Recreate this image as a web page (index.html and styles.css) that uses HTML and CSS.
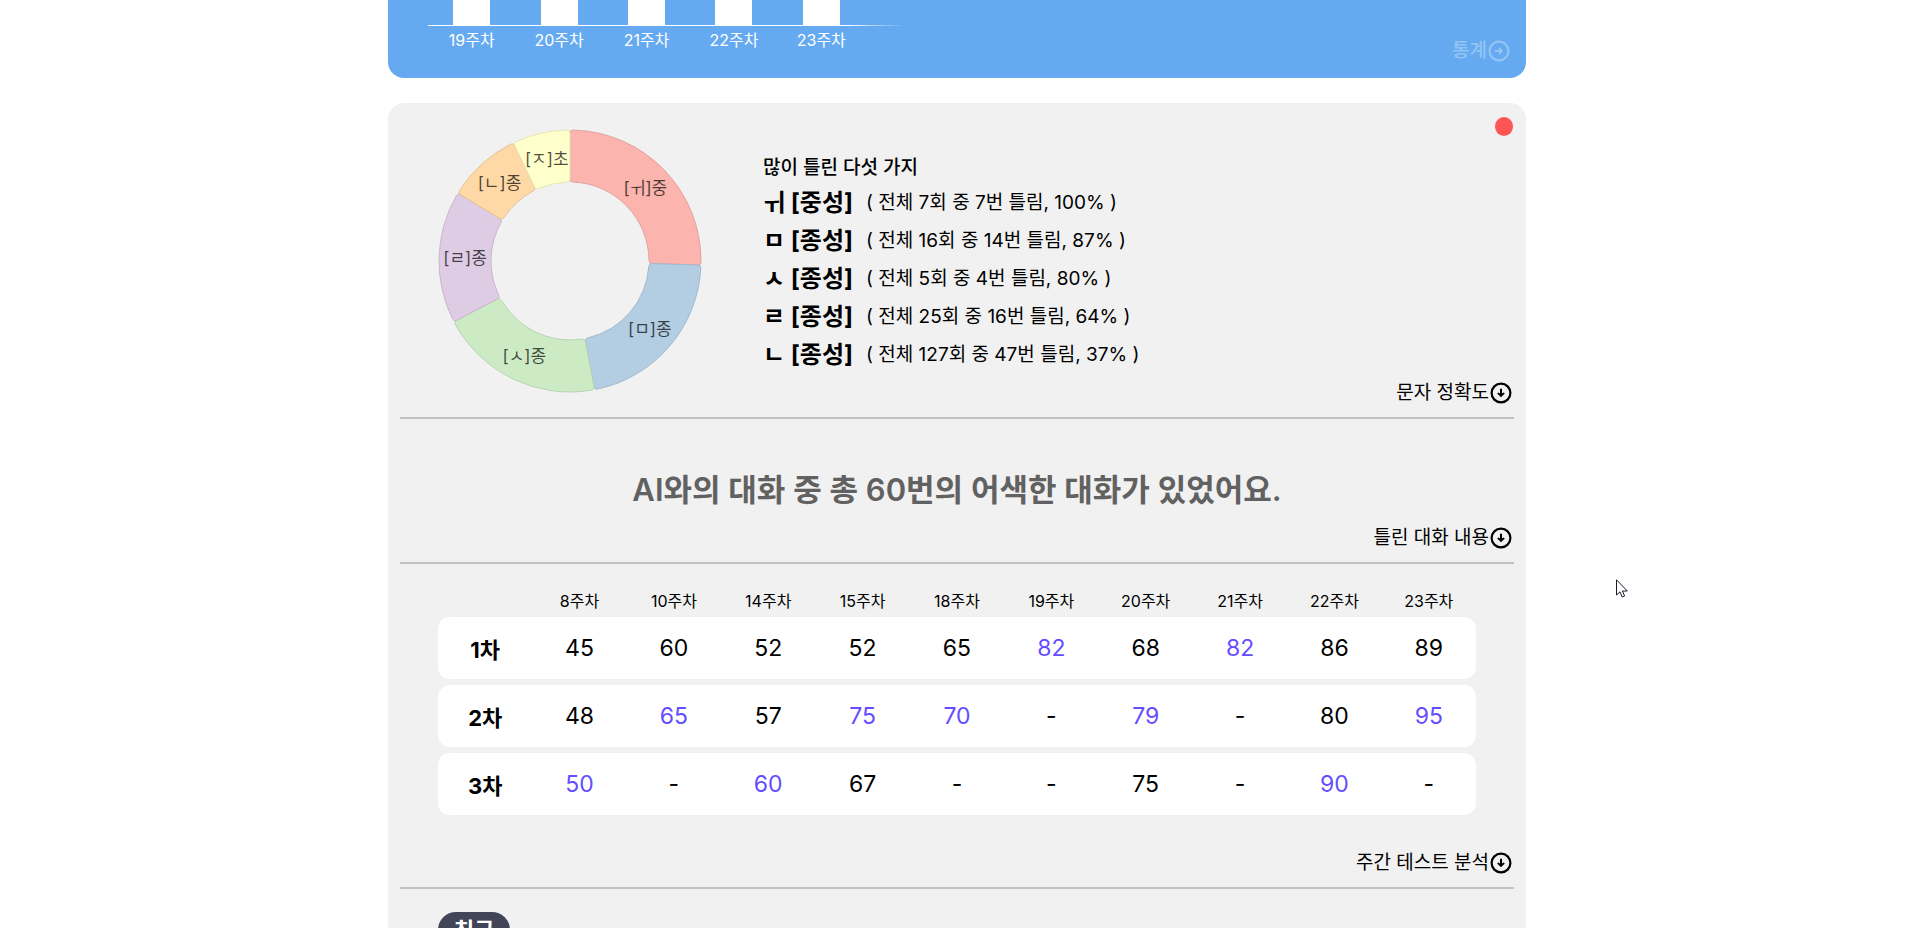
FILE: index.html
```html
<!DOCTYPE html>
<html lang="ko">
<head>
<meta charset="utf-8">
<title>학습 통계</title>
<link rel="stylesheet" href="styles.css">
</head>
<body>
<svg class="sprite" aria-hidden="true">
  <symbol id="arrow-down" viewBox="0 0 22 22">
    <circle cx="11" cy="11" r="9.4" fill="none" stroke="currentColor" stroke-width="2.2"/>
    <path d="M10 6.8H12V11.4L13.6 10.4L14.8 11.5L11 15.3L7.2 11.5L8.4 10.4L10 11.4Z" fill="currentColor"/>
  </symbol>
  <symbol id="arrow-right" viewBox="0 0 22 22">
    <circle cx="11" cy="11" r="9.4" fill="none" stroke="currentColor" stroke-width="2.2"/>
    <path d="M6.8 10V12H11.4L10.4 13.6L11.5 14.8L15.3 11L11.5 7.2L10.4 8.4L11.4 10Z" fill="currentColor"/>
  </symbol>
</svg>
<main class="page">
  <section class="summary">
    <div class="bars">
      <div class="bar-item"><span class="bar"></span><span class="bar-label">19주차</span></div>
      <div class="bar-item"><span class="bar"></span><span class="bar-label">20주차</span></div>
      <div class="bar-item"><span class="bar"></span><span class="bar-label">21주차</span></div>
      <div class="bar-item"><span class="bar"></span><span class="bar-label">22주차</span></div>
      <div class="bar-item"><span class="bar"></span><span class="bar-label">23주차</span></div>
    </div>
    <button class="more more-light" type="button">통계<svg class="icon"><use href="#arrow-right"/></svg></button>
  </section>

  <div class="report">
    <span class="dot"></span>
    <section class="block accuracy">
      <div class="accuracy-body">
        <svg class="donut" id="donut" viewBox="-132 -132 264 264" role="img" aria-label="많이 틀린 글자 비율"></svg>
        <div class="wrong">
          <h2 class="wrong-title">많이 틀린 다섯 가지</h2>
          <ul class="wrong-list">
            <li><b>ㅟ [중성]</b><span>( 전체 7회 중 7번 틀림, 100% )</span></li>
            <li><b>ㅁ [종성]</b><span>( 전체 16회 중 14번 틀림, 87% )</span></li>
            <li><b>ㅅ [종성]</b><span>( 전체 5회 중 4번 틀림, 80% )</span></li>
            <li><b>ㄹ [종성]</b><span>( 전체 25회 중 16번 틀림, 64% )</span></li>
            <li><b>ㄴ [종성]</b><span>( 전체 127회 중 47번 틀림, 37% )</span></li>
          </ul>
        </div>
      </div>
      <button class="more" type="button">문자 정확도<svg class="icon"><use href="#arrow-down"/></svg></button>
    </section>

    <section class="block talk">
      <h2 class="talk-title">AI와의 대화 중 총 60번의 어색한 대화가 있었어요.</h2>
      <button class="more" type="button">틀린 대화 내용<svg class="icon"><use href="#arrow-down"/></svg></button>
    </section>

    <section class="block weekly">
      <table class="scores">
        <thead>
          <tr><td></td><th scope="col">8주차</th><th scope="col">10주차</th><th scope="col">14주차</th><th scope="col">15주차</th><th scope="col">18주차</th><th scope="col">19주차</th><th scope="col">20주차</th><th scope="col">21주차</th><th scope="col">22주차</th><th scope="col">23주차</th></tr>
        </thead>
        <tbody>
          <tr><th scope="row">1차</th><td>45</td><td>60</td><td>52</td><td>52</td><td>65</td><td class="best">82</td><td>68</td><td class="best">82</td><td>86</td><td>89</td></tr>
          <tr><th scope="row">2차</th><td>48</td><td class="best">65</td><td>57</td><td class="best">75</td><td class="best">70</td><td>-</td><td class="best">79</td><td>-</td><td>80</td><td class="best">95</td></tr>
          <tr><th scope="row">3차</th><td class="best">50</td><td>-</td><td class="best">60</td><td>67</td><td>-</td><td>-</td><td>75</td><td>-</td><td class="best">90</td><td>-</td></tr>
        </tbody>
      </table>
      <button class="more" type="button">주간 테스트 분석<svg class="icon"><use href="#arrow-down"/></svg></button>
    </section>

    <section class="friends">
      <span class="badge">친구</span>
    </section>
  </div>
</main>
<svg class="cursor" viewBox="0 0 12 19" aria-hidden="true"><path d="M.5 .8V16L4 12.8L6.2 18L8.6 17L6.4 12H11.3Z" fill="#fff" stroke="#1a1a2a"/></svg>
<script src="chart.js"></script>
</body>
</html>
```
FILE: chart.js
```js
const slices = [
  { label: "[ㅟ]중", from: 0, to: 91.8, fill: "#fbb4ae", line: "#e2a29d" },
  { label: "[ㅁ]종", from: 91.8, to: 169.2, fill: "#b3cde3", line: "#a1b9cc" },
  { label: "[ㅅ]종", from: 169.2, to: 242.4, fill: "#ccebc5", line: "#b8d4b1" },
  { label: "[ㄹ]종", from: 242.4, to: 301.2, fill: "#decbe4", line: "#c8b7cd" },
  { label: "[ㄴ]종", from: 301.2, to: 334.4, fill: "#fed9a6", line: "#e5c395" },
  { label: "[ㅈ]초", from: 334.4, to: 360, fill: "#ffffcc", line: "#e6e6b8" }
];
const OUTER = 131;
const INNER = 79;
const CORNER = 3;
const svg = document.getElementById("donut");

// Point at a clockwise angle from twelve o'clock.
function point(radius, degrees) {
  const a = degrees * Math.PI / 180;
  return (radius * Math.sin(a)).toFixed(2) + " " + (-radius * Math.cos(a)).toFixed(2);
}

function slicePath(from, to) {
  const o = CORNER / OUTER * 180 / Math.PI;
  const i = CORNER / INNER * 180 / Math.PI;
  return "M" + point(OUTER, from + o) +
    "A" + OUTER + " " + OUTER + " 0 0 1 " + point(OUTER, to - o) +
    "Q" + point(OUTER, to) + " " + point(OUTER - CORNER, to) +
    "L" + point(INNER + CORNER, to) +
    "Q" + point(INNER, to) + " " + point(INNER, to - i) +
    "A" + INNER + " " + INNER + " 0 0 0 " + point(INNER, from + i) +
    "Q" + point(INNER, from) + " " + point(INNER + CORNER, from) +
    "L" + point(OUTER - CORNER, from) +
    "Q" + point(OUTER, from) + " " + point(OUTER, from + o) + "Z";
}

function add(name, attributes) {
  const node = document.createElementNS("http://www.w3.org/2000/svg", name);
  Object.entries(attributes).forEach(([key, value]) => node.setAttribute(key, value));
  svg.appendChild(node);
  return node;
}

slices.forEach(s => add("path", { d: slicePath(s.from, s.to), fill: s.fill, stroke: s.line }));
slices.forEach(s => {
  const [x, y] = point(105, (s.from + s.to) / 2).split(" ");
  add("text", { x, y, dy: 6, class: "donut-label" }).textContent = s.label;
});
```
FILE: styles.css
```css
* {
  box-sizing: border-box;
}

html {
  height: 100%;
  overflow: hidden;
}

body {
  height: 100%;
  margin: 0;
  padding-right: 6px;
  overflow: hidden;
  background: #fff;
  color: #000;
  font-family: Inter, "Noto Sans CJK KR", sans-serif;
}

h2,
ul {
  margin: 0;
  padding: 0;
}

.sprite {
  display: none;
}

.page {
  display: flex;
  flex-direction: column;
  gap: 25px;
  max-width: 1138px;
  margin: 0 auto;
}

.summary {
  display: flex;
  justify-content: space-between;
  align-items: flex-end;
  padding: 0 16px 15px 40px;
  border-radius: 0 0 16px 16px;
  background: #65aaf0;
}

.bars {
  display: grid;
  grid-template-columns: repeat(5, 1fr);
  width: 476px;
  padding-right: 39px;
  margin-bottom: 12px;
  background: linear-gradient(90deg, #fff 88%, transparent) 0 25px / 100% 1px no-repeat;
}

.bar-item {
  display: flex;
  flex-direction: column;
  align-items: center;
  gap: 4px;
}

.bar {
  width: 37px;
  height: 25px;
  background: #fff;
}

.bar-label {
  color: #fff;
  font-size: 16px;
  line-height: 22px;
}

.more {
  display: flex;
  align-items: center;
  align-self: flex-end;
  gap: 1px;
  padding: 0;
  border: 0;
  background: none;
  color: #000;
  font: inherit;
  font-size: 19px;
  line-height: 24px;
}

.more-light {
  color: #94c4f5;
  font-weight: 500;
}

.icon {
  width: 22px;
  height: 22px;
}

.report {
  position: relative;
  padding: 0 12px;
  border-radius: 16px 16px 0 0;
  background: #f1f1f1;
}

.dot {
  position: absolute;
  top: 14px;
  right: 13px;
  width: 18px;
  height: 19px;
  border-radius: 50%;
  background: #ff5454;
}

.block {
  display: flex;
  flex-direction: column;
  padding: 0 2px 12px;
  border-bottom: 2px solid #c1c1c1;
}

.accuracy {
  padding-top: 26px;
}

.accuracy-body {
  display: flex;
  gap: 61px;
  padding-left: 36px;
}

.donut {
  width: 264px;
  height: 264px;
  margin-bottom: -12px;
}

.donut-label {
  fill: #000;
  fill-opacity: 0.7;
  font-size: 17px;
  text-anchor: middle;
}

.wrong-title {
  padding-top: 26px;
  font-size: 19px;
  font-weight: 500;
  line-height: 26px;
}

.wrong-list {
  list-style: none;
}

.wrong-list li {
  display: flex;
  align-items: center;
  gap: 13px;
  height: 38px;
  font-size: 19px;
}

.wrong-list b {
  font-size: 24px;
  font-weight: 700;
}

.talk {
  gap: 16px;
  padding-top: 50px;
}

.talk-title {
  color: #616161;
  font-size: 31px;
  font-weight: 600;
  line-height: 41px;
  text-align: center;
}

.weekly {
  gap: 30px;
  padding-top: 20px;
}

.scores {
  width: calc(100% - 72px);
  margin: 0 36px;
  border-collapse: separate;
  border-spacing: 0 6px;
  table-layout: fixed;
  text-align: center;
}

.scores th,
.scores td {
  padding: 0;
}

.scores thead th {
  padding-top: 1px;
  font-size: 16px;
  font-weight: 400;
  line-height: 20px;
}

.scores tbody th,
.scores tbody td {
  height: 62px;
  background: #fff;
  font-size: 23px;
}

.scores tbody th {
  border-radius: 12px 0 0 12px;
  font-size: 22px;
  font-weight: 700;
}

.scores tbody td:last-child {
  border-radius: 0 12px 12px 0;
}

.scores .best {
  color: #644dff;
}

.friends {
  padding: 23px 38px;
}

.badge {
  display: inline-block;
  padding: 2px 16px;
  border-radius: 18px;
  background: #424458;
  color: #fff;
  font-size: 22px;
  font-weight: 700;
  line-height: 32px;
}

.cursor {
  position: absolute;
  top: 579px;
  left: 1616px;
  width: 12px;
  height: 19px;
}
```
